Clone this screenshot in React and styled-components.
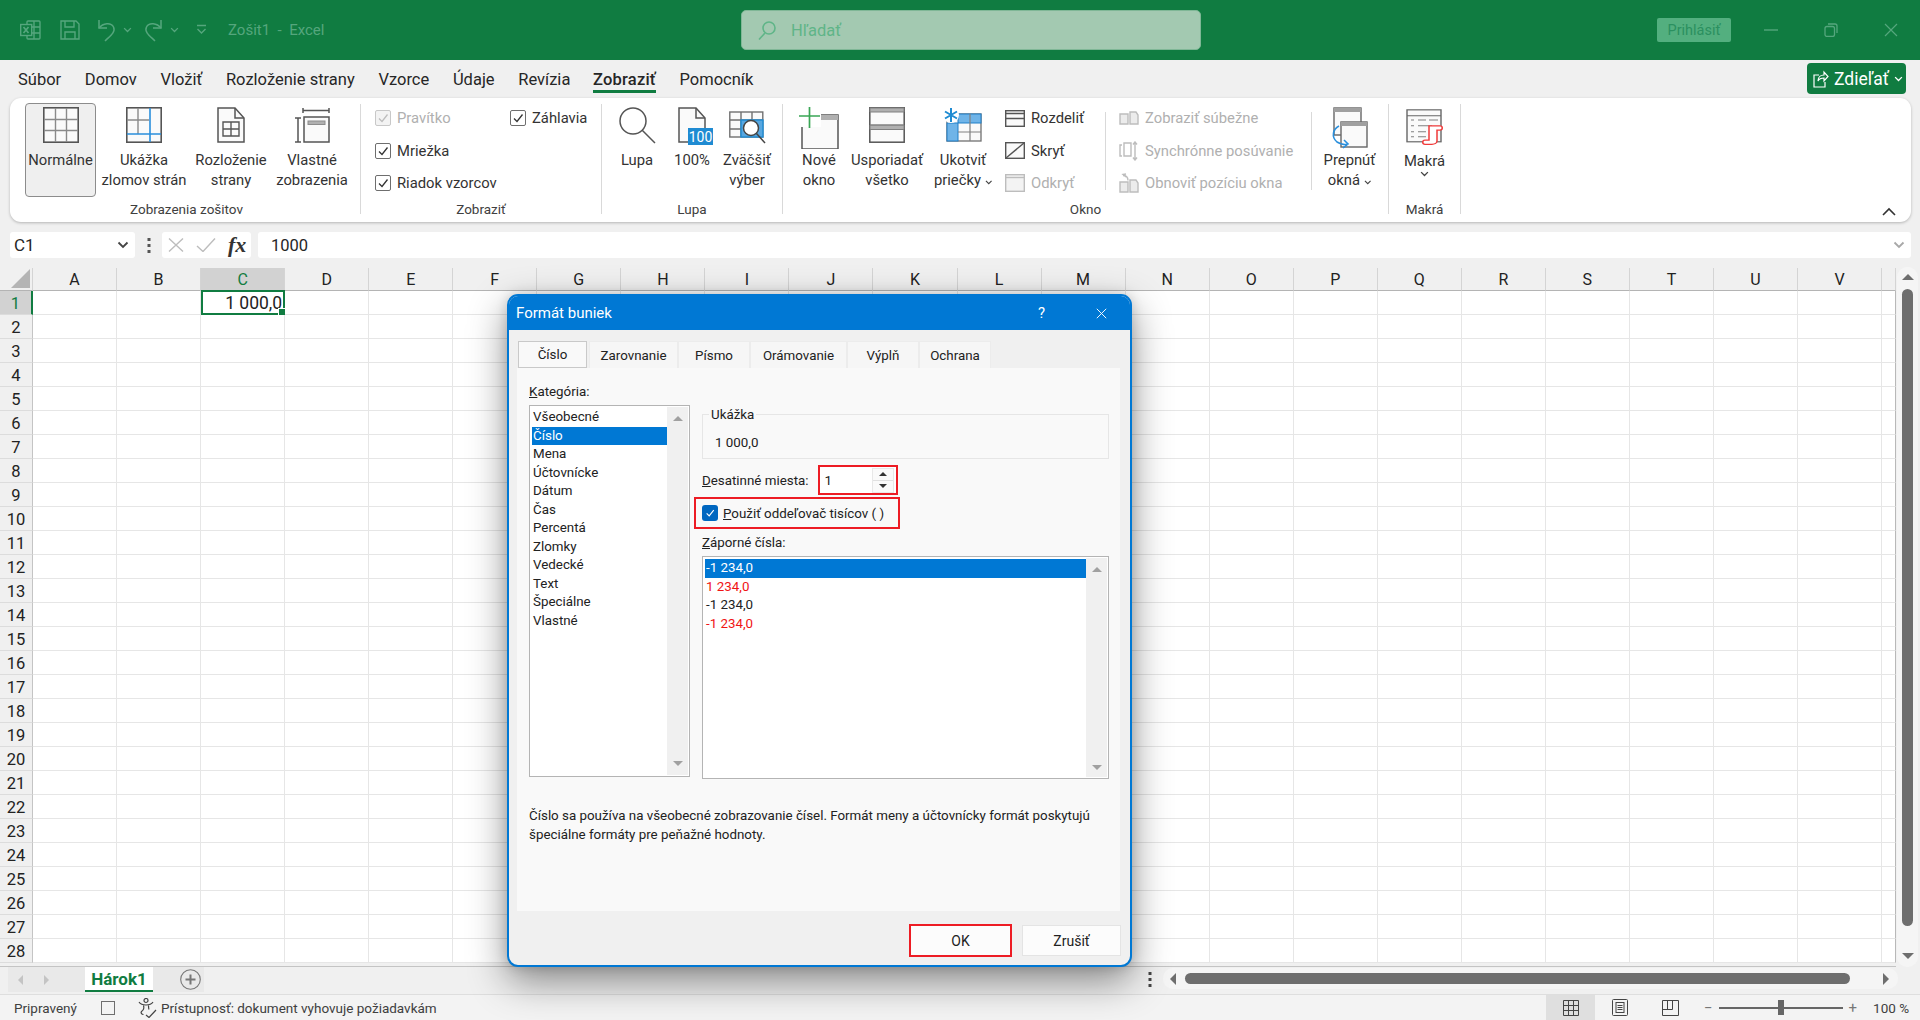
import React from 'react';
import styled, { createGlobalStyle } from 'styled-components';

const FONT = '"Roboto", "Open Sans", "Liberation Sans", sans-serif';
const GREEN = '#107C41';
const FADE = '#55a67d';
const RED = '#ed1c24';
const BLUE = '#0078D4';

const Global = createGlobalStyle`
  * { box-sizing: border-box; }
  html, body { margin: 0; padding: 0; width: 1920px; height: 1020px; overflow: hidden; }
  body { background: #f0f0f0; font-family: ${FONT}; color: #222; }
`;

const Page = styled.div`
  position: relative;
  width: 1920px;
  height: 1020px;
  overflow: hidden;
  background: #f0f0f0;
`;

/* title bar */
const TitleBar = styled.div`
  height: 60px;
  background: ${GREEN};
  display: flex;
  align-items: center;
  padding-left: 20px;
`;
const QuickIcon = styled.div`
  display: flex;
  align-items: center;
  margin-right: ${p => p.$gap || 0}px;
`;
const DocTitle = styled.div`
  width: 513px;
  font-size: 15px;
  color: ${FADE};
  white-space: pre;
`;
const SearchBox = styled.div`
  width: 460px;
  height: 40px;
  background: #a3c9b1;
  border: 1px solid #7fb796;
  border-radius: 5px;
  display: flex;
  align-items: center;
  gap: 15px;
  padding-left: 16px;
  font-size: 16.5px;
  color: #5fb588;
`;
const SignIn = styled.div`
  margin-left: 456px;
  width: 74px;
  height: 24px;
  background: #53af7f;
  border-radius: 2px;
  display: flex;
  align-items: center;
  justify-content: center;
  font-size: 14.5px;
  color: #2b9060;
`;
const WinButtons = styled.div`
  margin-left: 33px;
  display: flex;
  align-items: center;
  gap: 46px;
`;

/* tabs */
const TabRow = styled.div`
  height: 38px;
  display: flex;
  align-items: flex-start;
  padding-left: 18px;
  gap: 23.7px;
  position: relative;
`;
const MenuTab = styled.div`
  height: 33px;
  padding-top: 9px;
  font-size: 16.5px;
  line-height: 22px;
  color: #262626;
  ${p => p.$active && `
    font-weight: 500;
    margin-left: -1px;
    letter-spacing: .2px;
    border-bottom: 3px solid ${GREEN};
  `}
`;
const ShareBtn = styled.div`
  position: absolute;
  left: 1807px;
  top: 3px;
  width: 99px;
  height: 31px;
  background: ${GREEN};
  border-radius: 4px;
  color: #fff;
  font-size: 17.5px;
  display: flex;
  align-items: center;
  padding-left: 6px;
  gap: 5px;
`;

/* ribbon */
const Ribbon = styled.div`
  position: relative;
  margin-left: 10px;
  width: 1901px;
  height: 124px;
  background: #fff;
  border-radius: 11px;
  box-shadow: 0 1px 3px rgba(0,0,0,.25);
  display: flex;
  padding-top: 6px;
`;
const Group = styled.div`
  width: ${p => p.$w}px;
  height: 110px;
  flex-shrink: 0;
  border-right: 1px solid #d9d9d9;
  display: flex;
  flex-direction: column;
`;
const GroupBody = styled.div`
  height: 95px;
  flex-shrink: 0;
  display: flex;
  padding-left: ${p => p.$pad || 0}px;
`;
const GroupLabel = styled.div`
  flex-shrink: 0;
  height: 20px;
  line-height: 20px;
  text-align: center;
  font-size: 13.5px;
  color: #404040;
  padding-left: ${p => p.$pad || 0}px;
`;
const BigBtn = styled.div`
  width: ${p => p.$w}px;
  height: 94px;
  margin-top: -1px;
  flex-shrink: 0;
  display: flex;
  flex-direction: column;
  align-items: center;
  border: 1px solid transparent;
  border-radius: 4px;
  font-size: 14.8px;
  line-height: 20px;
  color: #333;
  text-align: center;
  ${p => p.$active && `
    background: #efefef;
    border-color: #8c8c8c;
  `}
`;
const BigIcon = styled.div`
  height: ${p => p.$h || 46}px;
  padding-top: ${p => p.$top || 3}px;
  padding-left: ${p => p.$left || 0}px;
  flex-shrink: 0;
  display: flex;
  justify-content: center;
`;
const SmallCol = styled.div`
  width: ${p => p.$w}px;
  flex-shrink: 0;
  display: flex;
  flex-direction: column;
  gap: 4.5px;
  margin-left: ${p => p.$ml || 0}px;
  padding-left: ${p => p.$pl || 0}px;
  ${p => p.$sep && `
    position: relative;
    &::after {
      content: '';
      position: absolute;
      right: 0;
      top: 8px;
      height: 78px;
      width: 1px;
      background: #d9d9d9;
    }
  `}
`;
const SmallRow = styled.div`
  height: 28px;
  display: flex;
  align-items: center;
  gap: 6px;
  font-size: 14.8px;
  white-space: nowrap;
  color: ${p => (p.$off ? '#b0b0b0' : '#333')};
`;
const CheckBox = styled.span`
  width: 16px;
  height: 16px;
  flex-shrink: 0;
  border-radius: 2px;
  border: 1px solid ${p => (p.$off ? '#c8c8c8' : '#6e6e6e')};
  background: ${p => (p.$off ? '#f3f3f3' : '#fff')};
  display: flex;
  align-items: center;
  justify-content: center;
`;
const Collapse = styled.div`
  position: absolute;
  left: 1872px;
  top: 103px;
`;

/* formula bar */
const FormulaRow = styled.div`
  margin: 10px 0 0 10px;
  width: 1901px;
  height: 26px;
  display: flex;
`;
const NameBox = styled.div`
  width: 125px;
  background: #fff;
  border-radius: 3px;
  display: flex;
  align-items: center;
  justify-content: space-between;
  padding: 0 6px 0 4px;
  font-size: 17px;
  color: #262626;
`;
const Dots = styled.div`
  width: 27px;
  display: flex;
  align-items: center;
  justify-content: center;
`;
const FxBox = styled.div`
  width: 89px;
  background: #fff;
  border-radius: 3px;
  display: flex;
  align-items: center;
  padding-left: 6px;
  gap: 12px;
`;
const FxGlyph = styled.span`
  font-family: "Liberation Serif", serif;
  font-style: italic;
  font-weight: 700;
  font-size: 22px;
  line-height: 26px;
  color: #333;
`;
const FormulaInput = styled.div`
  margin-left: 7px;
  flex: 1;
  background: #fff;
  border-radius: 3px;
  display: flex;
  align-items: center;
  justify-content: space-between;
  padding: 0 6px 0 13px;
  font-size: 16.5px;
  color: #262626;
`;

/* sheet */
const SheetArea = styled.div`
  margin-top: 10px;
  height: 699px;
  display: flex;
`;
const Sheet = styled.div`
  width: 1897px;
  height: 699px;
  border-bottom: 1px solid #c4c4c4;
  position: relative;
`;
const GridRow = styled.div`
  display: grid;
  grid-template-columns: 33px repeat(22, 84.05px) 1fr;
  height: ${p => p.$h}px;
`;
const Corner = styled.div`
  display: flex;
  align-items: flex-end;
  justify-content: flex-end;
  padding: 0 2px 2px 0;
  border-bottom: 1px solid #b4b4b4;
  border-right: 1px solid #d4d4d4;
`;
const ColHead = styled.div`
  display: flex;
  align-items: center;
  justify-content: center;
  font-size: 16px;
  border-right: 1px solid #d4d4d4;
  border-bottom: 1px solid #b4b4b4;
  background: ${p => (p.$sel ? '#d2d2d2' : '#f0f0f0')};
  color: ${p => (p.$sel ? GREEN : '#222')};
`;
const RowHead = styled.div`
  display: flex;
  align-items: center;
  justify-content: center;
  padding-top: 2px;
  font-size: 16.5px;
  background: ${p => (p.$sel ? '#d2d2d2' : '#f0f0f0')};
  color: ${p => (p.$sel ? GREEN : '#222')};
  border-right: ${p => (p.$sel ? `2px solid ${GREEN}` : '1px solid #c4c4c4')};
  border-bottom: 1px solid #dcdcdc;
`;
const Cell = styled.div`
  background: #fff;
  border-right: 1px solid #e6e6e6;
  border-bottom: 1px solid #e6e6e6;
  position: relative;
`;
const LastCell = styled(Cell)`
  border-right: 1px solid #b8b8b8;
`;
const ActiveCell = styled.div`
  position: absolute;
  inset: -1px -1px -1px 0;
  border: 2px solid ${GREEN};
  display: flex;
  align-items: center;
  justify-content: flex-end;
  padding: 1px 1px 0 0;
  font-size: 17.5px;
  color: #222;
  &::after {
    content: '';
    position: absolute;
    right: -3px;
    bottom: -3px;
    width: 6px;
    height: 6px;
    background: ${GREEN};
    border: 1px solid #fff;
  }
`;
const VTrack = styled.div`
  margin: -1px 2px 0 1px;
  width: 21px;
  height: 700px;
  background: #f5f5f5;
  border-radius: 10px;
  display: flex;
  flex-direction: column;
  align-items: center;
  padding-top: 7px;
`;
const VThumb = styled.div`
  margin-top: 9px;
  width: 11px;
  height: 637px;
  background: #6e6e6e;
  border-radius: 6px;
`;
const Tri = styled.div`
  width: 0;
  height: 0;
  ${p => p.$dir === 'up' && `border-left: ${p.$s}px solid transparent; border-right: ${p.$s}px solid transparent; border-bottom: ${p.$s}px solid ${p.$c};`}
  ${p => p.$dir === 'down' && `border-left: ${p.$s}px solid transparent; border-right: ${p.$s}px solid transparent; border-top: ${p.$s}px solid ${p.$c};`}
  ${p => p.$dir === 'left' && `border-top: ${p.$s}px solid transparent; border-bottom: ${p.$s}px solid transparent; border-right: ${p.$s}px solid ${p.$c};`}
  ${p => p.$dir === 'right' && `border-top: ${p.$s}px solid transparent; border-bottom: ${p.$s}px solid transparent; border-left: ${p.$s}px solid ${p.$c};`}
`;
const VDown = styled.div`
  margin-top: 27px;
`;

/* sheet tab bar */
const SheetBar = styled.div`
  height: 25px;
  display: flex;
  align-items: stretch;
  padding-left: 8px;
  border-bottom: 0;
`;
const SheetNav = styled.div`
  width: 77px;
  background: #e9e9e9;
  display: flex;
  align-items: center;
  gap: 21px;
  padding-left: 10px;
`;
const SheetTab = styled.div`
  width: 68px;
  background: #fff;
  color: ${GREEN};
  font-weight: 700;
  font-size: 17px;
  display: flex;
  align-items: center;
  justify-content: center;
  border-bottom: 2px solid ${GREEN};
`;
const AddArea = styled.div`
  width: 51px;
  background: #e9e9e9;
  display: flex;
  align-items: center;
  justify-content: center;
  padding-left: 24px;
`;
const BarDots = styled.div`
  margin-left: 936px;
  width: 20px;
  display: flex;
  align-items: center;
  justify-content: center;
`;
const HTrack = styled.div`
  margin: 1px 0 3px 3px;
  width: 735px;
  background: #f5f5f5;
  border-radius: 10px;
  display: flex;
  align-items: center;
  padding: 0 8px 0 7px;
`;
const HThumb = styled.div`
  margin-left: 9px;
  width: 665px;
  height: 11px;
  background: #6e6e6e;
  border-radius: 6px;
`;
const HRight = styled.div`
  margin-left: 33px;
`;

/* status bar */
const StatusBar = styled.div`
  margin-top: 2px;
  height: 26px;
  background: #f3f3f3;
  border-top: 1px solid #dedede;
  display: flex;
  align-items: center;
  padding-left: 14px;
  font-size: 13.5px;
  color: #404040;
`;
const Ready = styled.div`
  width: 87px;
`;
const MacroBox = styled.div`
  width: 14px;
  height: 14px;
  border: 1px solid #6e6e6e;
  margin-right: 23px;
`;
const A11y = styled.div`
  display: flex;
  align-items: center;
  gap: 4px;
  width: 1408px;
`;
const ViewBtn = styled.div`
  width: ${p => p.$w}px;
  height: 25px;
  display: flex;
  align-items: center;
  justify-content: center;
  background: ${p => (p.$active ? '#dfdfdf' : 'transparent')};
`;
const Zoomer = styled.div`
  margin-left: 9px;
  display: flex;
  align-items: center;
  color: #777;
  font-size: 15px;
`;
const SliderLine = styled.div`
  margin: 0 6px;
  position: relative;
  width: 124px;
  height: 2px;
  background: #666;
`;
const SliderKnob = styled.div`
  position: absolute;
  left: 59px;
  top: -7px;
  width: 6px;
  height: 15px;
  background: #666;
`;
const ZoomVal = styled.div`
  margin-left: 16px;
  font-size: 13.5px;
  color: #404040;
`;

/* dialog */
const Dialog = styled.div`
  position: absolute;
  left: 507px;
  top: 294px;
  width: 625px;
  height: 673px;
  background: #f0f0f0;
  border: 2px solid ${BLUE};
  border-radius: 11px;
  box-shadow: 0 14px 38px rgba(0,0,0,.44), 0 0 12px rgba(0,0,0,.15);
  overflow: hidden;
  font-size: 13.35px;
  color: #222;
`;
const DlgTitle = styled.div`
  height: 34px;
  background: ${BLUE};
  color: #fff;
  display: flex;
  align-items: center;
  padding: 0 23px 0 7px;
  font-size: 15px;
`;
const DlgCaption = styled.div`
  flex: 1;
`;
const DlgHelp = styled.div`
  width: 58px;
`;
const DlgTabs = styled.div`
  margin-top: 11px;
  height: 27px;
  display: flex;
  padding-left: 9px;
`;
const DlgTab = styled.div`
  width: ${p => p.$w}px;
  display: flex;
  align-items: center;
  justify-content: center;
  background: #f6f6f6;
  border: 1px solid #ececec;
  border-bottom: 0;
  ${p => p.$active && `
    background: #f9f9f9;
    border: 1px solid #c9c9c9;
    margin-right: 2px;
  `}
`;
const Panel = styled.div`
  margin-left: 8px;
  width: 603px;
  height: 543px;
  background: #f9f9f9;
  padding-left: 12px;
`;
const PanelCols = styled.div`
  display: flex;
  gap: 12px;
  height: 411px;
`;
const LeftCol = styled.div`
  width: 161px;
  padding-top: 14px;
`;
const FieldLabel = styled.div`
  height: 20px;
  line-height: 20px;
`;
const ListBox = styled.div`
  margin-top: ${p => p.$mt}px;
  height: ${p => p.$h}px;
  background: #fff;
  border: 1px solid #b4b4b4;
  padding: 2px;
  display: flex;
  position: relative;
`;
const ListItems = styled.div`
  flex: 1;
`;
const ListItem = styled.div`
  height: 18.5px;
  line-height: 18px;
  padding-left: 1px;
  white-space: nowrap;
  background: ${p => (p.$sel ? BLUE : 'transparent')};
  color: ${p => (p.$sel ? '#fff' : p.$red ? '#f01414' : '#222')};
`;
const ListScroll = styled.div`
  width: 21px;
  margin: -1px -1px -1px 0;
  background: #f0f0f0;
  display: flex;
  flex-direction: column;
  align-items: center;
  justify-content: space-between;
  padding: 9px 0 ${p => p.$pb}px;
`;
const RightCol = styled.div`
  width: 407px;
  padding-top: 46px;
`;
const Sample = styled.div`
  height: 45px;
  border: 1px solid #e6e6e6;
  position: relative;
  padding: 19px 0 0 12px;
  line-height: 18px;
`;
const SampleLegend = styled.div`
  position: absolute;
  left: 6px;
  top: -8px;
  padding: 0 2px;
  background: #f9f9f9;
  line-height: 16px;
`;
const DecimalRow = styled.div`
  margin-top: 6px;
  height: 30px;
  display: flex;
  align-items: center;
`;
const DecimalLabel = styled.div`
  width: 115.5px;
`;
const RedBox = styled.div`
  border: 2px solid ${RED};
`;
const SpinBox = styled(RedBox)`
  width: 80px;
  height: 30px;
  background: #fff;
  display: flex;
  align-items: center;
  padding-left: 5px;
  justify-content: space-between;
  padding-right: 2px;
`;
const Spin = styled.div`
  width: 22px;
  height: 25px;
  display: flex;
  flex-direction: column;
  border: 1px solid #e8e8e8;
`;
const SpinPart = styled.div`
  flex: 1;
  display: flex;
  align-items: center;
  justify-content: center;
  background: #fafafa;
  & + & {
    border-top: 1px solid #e0e0e0;
  }
`;
const SeparatorBox = styled(RedBox)`
  margin: 2px 0 0 -8px;
  width: 206px;
  height: 32px;
  display: flex;
  align-items: center;
  padding-left: 6px;
  gap: 5px;
  white-space: nowrap;
`;
const BlueCheck = styled.span`
  width: 16px;
  height: 16px;
  background: #0067c0;
  border-radius: 3px;
  display: flex;
  align-items: center;
  justify-content: center;
`;
const NegLabel = styled(FieldLabel)`
  margin-top: 4px;
`;
const Description = styled.div`
  margin-top: 28px;
  line-height: 18.5px;
  width: 570px;
`;
const DlgFooter = styled.div`
  height: 54px;
  padding: 13px 9px 0 0;
  display: flex;
  justify-content: flex-end;
  gap: 10px;
`;
const OkBtn = styled(RedBox)`
  width: 103px;
  height: 33px;
  background: #fcfcfc;
  display: flex;
  align-items: center;
  justify-content: center;
  font-size: 14px;
`;
const CancelBtn = styled.div`
  width: 99px;
  height: 31px;
  margin-top: 1px;
  background: #fcfcfc;
  border: 1px solid #e4e4e4;
  display: flex;
  align-items: center;
  justify-content: center;
  font-size: 14px;
`;

/* drawings */
const Chevron = ({ size = 8, color = '#444', w = 1.4 }) => (
  <svg width={size * 1.5} height={size} viewBox="0 0 12 8"><path d="M1.5 1.5 6 6l4.5-4.5" fill="none" stroke={color} strokeWidth={w * 1.3} /></svg>
);
const Check = ({ color = '#333', s = 12 }) => (
  <svg width={s} height={s} viewBox="0 0 12 12"><path d="M2 6.5 5 9.5 10.5 2.5" fill="none" stroke={color} strokeWidth="1.3" /></svg>
);

const ExcelLogo = () => (
  <svg width="21" height="20" viewBox="0 0 21 20" fill="none" stroke={FADE} strokeWidth="1.4">
    <rect x="7" y="1" width="13" height="18" rx="1" />
    <path d="M14 1v18M7 7h13M7 13h13" />
    <rect x="0.7" y="4.5" width="11" height="11" fill={GREEN} />
    <path d="M3.5 7l5 6M8.5 7l-5 6" strokeWidth="1.7" />
  </svg>
);
const SaveIcon = () => (
  <svg width="20" height="20" viewBox="0 0 20 20" fill="none" stroke={FADE} strokeWidth="1.4">
    <path d="M1 1h15l3 3v15H1z" />
    <path d="M5 1v6h9V1M5 19v-7h10v7" />
  </svg>
);
const UndoIcon = ({ flip }) => (
  <svg width="19" height="24" viewBox="0 0 19 24" fill="none" stroke={FADE} strokeWidth="1.5" style={flip ? { transform: 'scaleX(-1)' } : undefined}>
    <path d="M2 2v8h8" />
    <path d="M2 10C6 5 14 4 16.5 9 19 14 13 18 8 23" />
  </svg>
);
const CustomizeIcon = () => (
  <svg width="11" height="12" viewBox="0 0 11 12" fill="none" stroke={FADE} strokeWidth="1.4">
    <path d="M1 1.5h9M1.5 5 5.5 9 9.5 5" />
  </svg>
);
const SearchIcon = () => (
  <svg width="18" height="19" viewBox="0 0 18 19" fill="none" stroke="#5fb588" strokeWidth="1.6">
    <circle cx="11" cy="7" r="6" />
    <path d="M7 12 1 18.5" />
  </svg>
);
const MinIcon = () => (
  <svg width="14" height="2" viewBox="0 0 14 2"><path d="M0 1h14" stroke={FADE} strokeWidth="1.4" /></svg>
);
const RestoreIcon = () => (
  <svg width="14" height="14" viewBox="0 0 14 14" fill="none" stroke={FADE} strokeWidth="1.3">
    <rect x="1" y="3.5" width="9.5" height="10" rx="2" />
    <path d="M4 1h7a2 2 0 0 1 2 2v7" />
  </svg>
);
const CloseIcon = ({ color = FADE, s = 14 }) => (
  <svg width={s} height={s} viewBox="0 0 14 14"><path d="M1 1l12 12M13 1 1 13" stroke={color} strokeWidth="1.2" fill="none" /></svg>
);
const ShareIcon = () => (
  <svg width="16" height="18" viewBox="0 0 16 18" fill="none" stroke="#fff" strokeWidth="1.2">
    <path d="M6 5H1v12h11v-5" />
    <path d="M5 11c0-4 3-6 6-6V2l4 4.5L11 11V8c-3 0-5 1-6 3z" />
  </svg>
);

const NormalIcon = () => (
  <svg width="36" height="36" viewBox="0 0 36 36" fill="#fafafa" stroke="#555">
    <rect x=".8" y=".8" width="34.4" height="34.4" strokeWidth="1.6" />
    <path d="M12.5 1v34M23.5 1v34M1 12.5h34M1 23.5h34" stroke="#8a8a8a" strokeWidth="1.4" />
  </svg>
);
const BreakIcon = () => (
  <svg width="36" height="36" viewBox="0 0 36 36" fill="#fafafa" stroke="#555">
    <rect x=".8" y=".8" width="34.4" height="34.4" strokeWidth="1.6" />
    <path d="M12 1v26M1 13h22" stroke="#8a8a8a" strokeWidth="1.4" />
    <path d="M24 1v34M1 27h34" stroke="#2a8fdc" strokeWidth="1.6" />
  </svg>
);
const LayoutIcon = () => (
  <svg width="28" height="36" viewBox="0 0 28 36" fill="#fafafa" stroke="#555" strokeWidth="1.5">
    <path d="M1 1h17l9 10v24H1z" />
    <path d="M18 1v10h9" fill="none" />
    <path d="M6 15h16v14H6zM6 22h16M14 15v14" fill="none" strokeWidth="1.4" />
  </svg>
);
const CustomViewIcon = () => (
  <svg width="36" height="36" viewBox="0 0 36 36" fill="none" stroke="#555" strokeWidth="1.5">
    <path d="M9 1v5M35 1v5M9 3.5h26" />
    <path d="M1 11h6M1 35h6M4 11v24" />
    <rect x="10" y="10" width="25" height="25" fill="#fafafa" />
    <rect x="14" y="14" width="17" height="3.5" fill="#b0b0b0" stroke="#8c8c8c" strokeWidth="1" />
  </svg>
);
const LupaIcon = () => (
  <svg width="37" height="37" viewBox="0 0 37 37" fill="none" stroke="#555" strokeWidth="1.5">
    <circle cx="14" cy="14" r="13" />
    <path d="M23 23 36 36" />
  </svg>
);
const HundredIcon = () => (
  <svg width="35" height="39" viewBox="0 0 35 39" fill="#fafafa" stroke="#555" strokeWidth="1.5">
    <path d="M1 1h17l9 10v24H1z" />
    <path d="M18 1v10h9" fill="none" />
    <rect x="10" y="21" width="25" height="17" fill="#1f8bd2" stroke="none" />
    <text x="22.5" y="34.5" fontSize="14" fill="#fff" stroke="none" textAnchor="middle" fontFamily="Roboto">100</text>
  </svg>
);
const ZoomSelIcon = () => (
  <svg width="37" height="37" viewBox="0 0 37 37" fill="#fafafa" stroke="#707070" strokeWidth="1.4">
    <rect x=".8" y="5" width="33" height="25" />
    <path d="M12 5v25M23 5v8M1 13h33M1 22h11" />
    <rect x="12" y="13" width="22" height="17" fill="#58a7e0" stroke="#1f8bd2" />
    <circle cx="22" cy="21" r="7.5" fill="#fff" stroke="#444" strokeWidth="1.5" />
    <path d="M27.5 26.5 36 36" stroke="#444" strokeWidth="1.5" />
  </svg>
);
const NewWinIcon = () => (
  <svg width="40" height="42" viewBox="0 0 40 42" fill="none">
    <rect x="3" y="8" width="36" height="34" fill="#fafafa" stroke="#555" strokeWidth="1.5" />
    <rect x="22" y="8" width="17" height="5" fill="#b0b0b0" />
    <rect x="0" y="0" width="22" height="20" fill="#fff" />
    <path d="M10.5 0v21M0 9h21" stroke="#3aa655" strokeWidth="1.7" />
  </svg>
);
const ArrangeIcon = () => (
  <svg width="36" height="36" viewBox="0 0 36 36" fill="#fafafa" stroke="#555" strokeWidth="1.5">
    <rect x=".8" y=".8" width="34.4" height="34.4" />
    <path d="M1 5h34v-4H1zM1 18h34M1 22.5h34v-4.5H1z" fill="#b0b0b0" stroke="#808080" strokeWidth="1" />
  </svg>
);
const FreezeIcon = () => (
  <svg width="40" height="36" viewBox="0 0 40 36" fill="none">
    <rect x="4" y="7" width="34" height="27" fill="#fafafa" stroke="#707070" strokeWidth="1.3" />
    <rect x="15" y="7" width="23" height="9" fill="#6fb4e8" stroke="#1f7fc8" />
    <rect x="4" y="16" width="11" height="18" fill="#6fb4e8" stroke="#1f7fc8" />
    <path d="M27 7v9M15 25h23M27 16v18" stroke="#808080" strokeWidth="1.2" />
    <circle cx="8" cy="8" r="8" fill="#fff" />
    <path d="M8 1v14M2 4.5l12 7M14 4.5l-12 7" stroke="#1f8bd2" strokeWidth="2" />
  </svg>
);
const SplitIcon = ({ off }) => (
  <svg width="20" height="17" viewBox="0 0 20 17" fill="#fafafa" stroke={off ? '#bdbdbd' : '#555'} strokeWidth="1.4">
    <rect x=".7" y=".7" width="18.6" height="15.6" />
    <path d="M1 3.5h18M1 8.5h18" />
  </svg>
);
const HideIcon = () => (
  <svg width="20" height="17" viewBox="0 0 20 17" fill="#fafafa" stroke="#555" strokeWidth="1.4">
    <rect x=".7" y=".7" width="18.6" height="15.6" />
    <path d="M1 16 19 1" />
  </svg>
);
const UnhideIcon = () => (
  <svg width="20" height="18" viewBox="0 0 20 18" fill="#f3f3f3" stroke="#bdbdbd" strokeWidth="1.4">
    <rect x=".7" y=".7" width="18.6" height="16.6" />
    <path d="M1 3.5h18" />
  </svg>
);
const SideIcon = () => (
  <svg width="20" height="14" viewBox="0 0 20 14" fill="#ececec" stroke="#bdbdbd" strokeWidth="1.4">
    <path d="M1 3h8v10H1zM11 1h6l2 3v9h-8z" />
  </svg>
);
const SyncIcon = () => (
  <svg width="20" height="20" viewBox="0 0 20 20" fill="none" stroke="#bdbdbd" strokeWidth="1.4">
    <path d="M3 4H1v11h2M5 2h7v13H5zM16 1v18M14 3.5 16 1l2 2.5M14 16.5l2 2.5 2-2.5" />
  </svg>
);
const ResetIcon = () => (
  <svg width="20" height="20" viewBox="0 0 20 20" fill="#ececec" stroke="#bdbdbd" strokeWidth="1.4">
    <path d="M1 9h8v10H1zM11 7h6l2 3v9h-8z" />
    <path d="M7 4 4 1.5 7 1M4 2.5c4 0 5 2 5 5" fill="none" />
  </svg>
);
const SwitchIcon = () => (
  <svg width="37" height="43" viewBox="0 0 37 43" fill="none">
    <rect x="3" y="1" width="27" height="27" fill="#fafafa" stroke="#666" strokeWidth="1.4" />
    <rect x="3" y="1" width="27" height="4" fill="#a0a0a0" />
    <rect x="10" y="15" width="26" height="25" fill="#fafafa" stroke="#666" strokeWidth="1.4" />
    <rect x="10" y="15" width="26" height="4" fill="#a0a0a0" />
    <path d="M8 19C2 22 0 30 6 35c3 2 8 3 11 2M13 33l4 4-5 4" stroke="#2a8fdc" strokeWidth="1.6" />
  </svg>
);
const MacroIcon = () => (
  <svg width="38" height="37" viewBox="0 0 38 44" fill="none" preserveAspectRatio="none">
    <rect x="1" y="1" width="34" height="38" fill="#fafafa" stroke="#666" strokeWidth="1.4" />
    <path d="M1 8h34" stroke="#666" strokeWidth="1.2" />
    <path d="M5 13h3M12 13h8M23 13h9M5 20h3M12 20h14M5 27h3M12 27h8M5 33h3M12 33h8" stroke="#808080" strokeWidth="1.3" />
    <path d="M23 20h11c3 0 3 5 0 5h-3v13c0 3-3 4-5 4H19c-3 0-3-5 0-5h4z" fill="#fff" stroke="#f03a3a" strokeWidth="1.5" />
  </svg>
);
const XMark = () => (
  <svg width="16" height="14" viewBox="0 0 16 14"><path d="M1 .5l14 13M15 .5 1 13.5" stroke="#bdbdbd" strokeWidth="1.4" /></svg>
);
const VMark = () => (
  <svg width="20" height="14" viewBox="0 0 20 14"><path d="M1 8l6 5.5L19 .5" stroke="#bdbdbd" strokeWidth="1.4" fill="none" /></svg>
);
const VerticalDots = ({ c = '#555' }) => (
  <svg width="4" height="15" viewBox="0 0 4 15" fill={c}><rect x="0.5" width="3" height="3" /><rect x="0.5" y="6" width="3" height="3" /><rect x="0.5" y="12" width="3" height="3" /></svg>
);
const CornerTri = () => (
  <svg width="19" height="19" viewBox="0 0 19 19"><path d="M19 0v19H0z" fill="#b4b4b4" /></svg>
);
const PlusCircle = () => (
  <svg width="21" height="21" viewBox="0 0 21 21" fill="none" stroke="#777">
    <circle cx="10.5" cy="10.5" r="9.8" strokeWidth="1.1" />
    <path d="M10.5 5.5v10M5.5 10.5h10" strokeWidth="2" />
  </svg>
);
const A11yIcon = () => (
  <svg width="19" height="20" viewBox="0 0 19 20" fill="none" stroke="#444" strokeWidth="1.2">
    <circle cx="8" cy="2.5" r="2" />
    <path d="M1 4c2 3 4 3 7 3s5 0 7-3M5.5 7.5c1 3-.5 5-2 6-1 1 0 3 2 3M10.5 7.5c0 2 0 3 .5 4" />
    <path d="M8 17l3 2.5L18 12" />
  </svg>
);
const StatusNormal = () => (
  <svg width="16" height="16" viewBox="0 0 16 16" fill="none" stroke="#444"><path d="M.5.5h15v15H.5zM5.5 0v16M10.5 0v16M0 5.5h16M0 10.5h16" /></svg>
);
const StatusPage = () => (
  <svg width="16" height="17" viewBox="0 0 16 17" fill="none" stroke="#444"><rect x=".5" y=".5" width="15" height="16" rx="1" /><rect x="4" y="3.5" width="8" height="10" /><path d="M5.5 6.5h5M5.5 8.5h5M5.5 10.5h5" /></svg>
);
const StatusBreak = () => (
  <svg width="17" height="16" viewBox="0 0 17 16" fill="none" stroke="#444"><path d="M.5.5h16v15H.5zM.5 9.5h10M5.5.5v9M10.5.5v9" /></svg>
);

const TABS = ['Súbor', 'Domov', 'Vložiť', 'Rozloženie strany', 'Vzorce', 'Údaje', 'Revízia', 'Zobraziť', 'Pomocník'];
const COLS = 'ABCDEFGHIJKLMNOPQRSTUV'.split('');
const ROWS = Array.from({ length: 28 }, (_, i) => i + 1);
const CATEGORIES = ['Všeobecné', 'Číslo', 'Mena', 'Účtovnícke', 'Dátum', 'Čas', 'Percentá', 'Zlomky', 'Vedecké', 'Text', 'Špeciálne', 'Vlastné'];
const DLG_TABS = [['Číslo', 69], ['Zarovnanie', 89], ['Písmo', 72], ['Orámovanie', 97], ['Výplň', 72], ['Ochrana', 72]];

function Big({ w, icon, children, active, top, left, h }) {
  return (
    <BigBtn $w={w} $active={active}>
      <BigIcon $top={top} $left={left} $h={h}>{icon}</BigIcon>
      {children}
    </BigBtn>
  );
}

function CheckRow({ off, children }) {
  return (
    <SmallRow $off={off}>
      <CheckBox $off={off}><Check color={off ? '#bdbdbd' : '#333'} /></CheckBox>
      {children}
    </SmallRow>
  );
}

export default function App() {
  return (
    <Page>
      <Global />
      <TitleBar>
        <QuickIcon $gap={19}><ExcelLogo /></QuickIcon>
        <QuickIcon $gap={17}><SaveIcon /></QuickIcon>
        <QuickIcon $gap={7}><UndoIcon /></QuickIcon>
        <QuickIcon $gap={12}><Chevron size={6} color={FADE} /></QuickIcon>
        <QuickIcon $gap={7}><UndoIcon flip /></QuickIcon>
        <QuickIcon $gap={17}><Chevron size={6} color={FADE} /></QuickIcon>
        <QuickIcon $gap={21}><CustomizeIcon /></QuickIcon>
        <DocTitle>{'Zošit1  -  Excel'}</DocTitle>
        <SearchBox><SearchIcon />Hľadať</SearchBox>
        <SignIn>Prihlásiť</SignIn>
        <WinButtons><MinIcon /><RestoreIcon /><CloseIcon /></WinButtons>
      </TitleBar>

      <TabRow>
        {TABS.map(t => <MenuTab key={t} $active={t === 'Zobraziť'}>{t}</MenuTab>)}
        <ShareBtn><ShareIcon />Zdieľať<Chevron size={6} color="#fff" /></ShareBtn>
      </TabRow>

      <Ribbon>
        <Group $w={351}>
          <GroupBody $pad={15}>
            <Big w={71} active icon={<NormalIcon />}>Normálne</Big>
            <Big w={96} icon={<BreakIcon />}>Ukážka<br />zlomov strán</Big>
            <Big w={78} icon={<LayoutIcon />}>Rozloženie<br />strany</Big>
            <Big w={84} icon={<CustomViewIcon />}>Vlastné<br />zobrazenia</Big>
          </GroupBody>
          <GroupLabel $pad={3}>Zobrazenia zošitov</GroupLabel>
        </Group>
        <Group $w={241}>
          <GroupBody $pad={14}>
            <SmallCol $w={135}>
              <CheckRow off>Pravítko</CheckRow>
              <CheckRow>Mriežka</CheckRow>
              <CheckRow>Riadok vzorcov</CheckRow>
            </SmallCol>
            <SmallCol $w={85}>
              <CheckRow>Záhlavia</CheckRow>
            </SmallCol>
          </GroupBody>
          <GroupLabel>Zobraziť</GroupLabel>
        </Group>
        <Group $w={181}>
          <GroupBody $pad={8}>
            <Big w={54} icon={<LupaIcon />}>Lupa</Big>
            <Big w={56} icon={<HundredIcon />} left={6}>100%</Big>
            <Big w={54} icon={<ZoomSelIcon />}>Zväčšiť<br />výber</Big>
          </GroupBody>
          <GroupLabel>Lupa</GroupLabel>
        </Group>
        <Group $w={606}>
          <GroupBody $pad={4}>
            <Big w={64} icon={<NewWinIcon />}>Nové<br />okno</Big>
            <Big w={72} icon={<ArrangeIcon />}>Usporiadať<br />všetko</Big>
            <Big w={80} icon={<FreezeIcon />}>Ukotviť<br /><span>priečky <Chevron size={5} color="#444" /></span></Big>
            <SmallCol $w={101} $sep $ml={2}>
              <SmallRow><SplitIcon />Rozdeliť</SmallRow>
              <SmallRow><HideIcon />Skryť</SmallRow>
              <SmallRow $off><UnhideIcon />Odkryť</SmallRow>
            </SmallCol>
            <SmallCol $w={206} $sep $pl={13}>
              <SmallRow $off><SideIcon />Zobraziť súbežne</SmallRow>
              <SmallRow $off><SyncIcon />Synchrónne posúvanie</SmallRow>
              <SmallRow $off><ResetIcon />Obnoviť pozíciu okna</SmallRow>
            </SmallCol>
            <Big w={75} icon={<SwitchIcon />}>Prepnúť<br /><span>okná <Chevron size={5} color="#444" /></span></Big>
          </GroupBody>
          <GroupLabel>Okno</GroupLabel>
        </Group>
        <Group $w={72}>
          <GroupBody>
            <Big w={71} icon={<MacroIcon />} top={5} h={47}>Makrá<br /><Chevron size={6} color="#444" /></Big>
          </GroupBody>
          <GroupLabel>Makrá</GroupLabel>
        </Group>
        <Collapse><svg width="14" height="9" viewBox="0 0 14 9"><path d="M1 8l6-6 6 6" fill="none" stroke="#333" strokeWidth="1.6" /></svg></Collapse>
      </Ribbon>

      <FormulaRow>
        <NameBox>C1<Chevron size={8} color="#444" /></NameBox>
        <Dots><VerticalDots /></Dots>
        <FxBox><XMark /><VMark /><FxGlyph>fx</FxGlyph></FxBox>
        <FormulaInput>1000<Chevron size={8} color="#a8a8a8" /></FormulaInput>
      </FormulaRow>

      <SheetArea>
        <Sheet>
          <GridRow $h={23}>
            <Corner><CornerTri /></Corner>
            {COLS.map(c => <ColHead key={c} $sel={c === 'C'}>{c}</ColHead>)}
            <ColHead />
          </GridRow>
          {ROWS.map(r => (
            <GridRow key={r} $h={24}>
              <RowHead $sel={r === 1}>{r}</RowHead>
              {COLS.map(c => (
                <Cell key={c}>
                  {r === 1 && c === 'C' && <ActiveCell>1 000,0</ActiveCell>}
                </Cell>
              ))}
              <LastCell />
            </GridRow>
          ))}
        </Sheet>
        <VTrack>
          <Tri $dir="up" $s={6} $c="#6e6e6e" />
          <VThumb />
          <VDown><Tri $dir="down" $s={6} $c="#6e6e6e" /></VDown>
        </VTrack>
      </SheetArea>

      <SheetBar>
        <SheetNav>
          <Tri $dir="left" $s={5} $c="#c4c4c4" />
          <Tri $dir="right" $s={5} $c="#c4c4c4" />
        </SheetNav>
        <SheetTab>Hárok1</SheetTab>
        <AddArea><PlusCircle /></AddArea>
        <BarDots><VerticalDots c="#444" /></BarDots>
        <HTrack>
          <Tri $dir="left" $s={6} $c="#6e6e6e" />
          <HThumb />
          <HRight><Tri $dir="right" $s={6} $c="#6e6e6e" /></HRight>
        </HTrack>
      </SheetBar>

      <StatusBar>
        <Ready>Pripravený</Ready>
        <MacroBox />
        <A11y><A11yIcon />Prístupnosť: dokument vyhovuje požiadavkám</A11y>
        <ViewBtn $w={49} $active><StatusNormal /></ViewBtn>
        <ViewBtn $w={50}><StatusPage /></ViewBtn>
        <ViewBtn $w={50}><StatusBreak /></ViewBtn>
        <Zoomer>
          −
          <SliderLine><SliderKnob /></SliderLine>
          +
          <ZoomVal>100 %</ZoomVal>
        </Zoomer>
      </StatusBar>

      <Dialog>
        <DlgTitle>
          <DlgCaption>Formát buniek</DlgCaption>
          <DlgHelp>?</DlgHelp>
          <CloseIcon color="#fff" s={11} />
        </DlgTitle>
        <DlgTabs>
          {DLG_TABS.map(([t, w], i) => <DlgTab key={t} $w={w} $active={i === 0}>{t}</DlgTab>)}
        </DlgTabs>
        <Panel>
          <PanelCols>
            <LeftCol>
              <FieldLabel><u>K</u>ategória:</FieldLabel>
              <ListBox $mt={3} $h={372}>
                <ListItems>
                  {CATEGORIES.map(c => <ListItem key={c} $sel={c === 'Číslo'}>{c}</ListItem>)}
                </ListItems>
                <ListScroll $pb={9}>
                  <Tri $dir="up" $s={5} $c="#a0a0a0" />
                  <Tri $dir="down" $s={5} $c="#a0a0a0" />
                </ListScroll>
              </ListBox>
            </LeftCol>
            <RightCol>
              <Sample>
                <SampleLegend>Ukážka</SampleLegend>
                1 000,0
              </Sample>
              <DecimalRow>
                <DecimalLabel><u>D</u>esatinné miesta:</DecimalLabel>
                <SpinBox>
                  1
                  <Spin>
                    <SpinPart><Tri $dir="up" $s={4} $c="#333" /></SpinPart>
                    <SpinPart><Tri $dir="down" $s={4} $c="#333" /></SpinPart>
                  </Spin>
                </SpinBox>
              </DecimalRow>
              <SeparatorBox>
                <BlueCheck><Check color="#fff" s={10} /></BlueCheck>
                <span><u>P</u>oužiť oddeľovač tisícov ( )</span>
              </SeparatorBox>
              <NegLabel><u>Z</u>áporné čísla:</NegLabel>
              <ListBox $mt={3} $h={223}>
                <ListItems>
                  <ListItem $sel>-1 234,0</ListItem>
                  <ListItem $red>1 234,0</ListItem>
                  <ListItem>-1 234,0</ListItem>
                  <ListItem $red>-1 234,0</ListItem>
                </ListItems>
                <ListScroll $pb={7}>
                  <Tri $dir="up" $s={5} $c="#a0a0a0" />
                  <Tri $dir="down" $s={5} $c="#a0a0a0" />
                </ListScroll>
              </ListBox>
            </RightCol>
          </PanelCols>
          <Description>
            Číslo sa používa na všeobecné zobrazovanie čísel. Formát meny a účtovnícky formát poskytujú špeciálne formáty pre peňažné hodnoty.
          </Description>
        </Panel>
        <DlgFooter>
          <OkBtn>OK</OkBtn>
          <CancelBtn>Zrušiť</CancelBtn>
        </DlgFooter>
      </Dialog>
    </Page>
  );
}
